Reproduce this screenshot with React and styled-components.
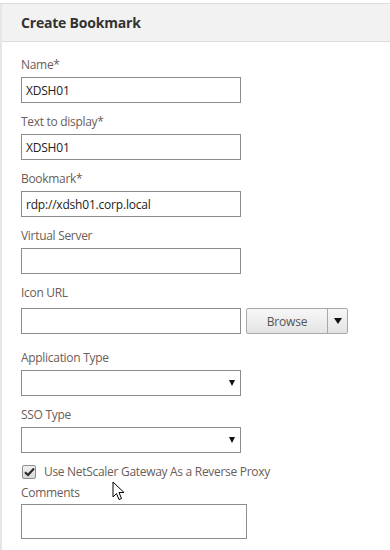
import React from "react";
import styled, { createGlobalStyle } from "styled-components";

const GlobalStyle = createGlobalStyle`
  html, body {
    margin: 0;
    padding: 0;
    background: #fff;
  }
  body {
    font-family: "Open Sans", "Noto Sans", Arial, sans-serif;
  }
`;

const Panel = styled.div`
  position: relative;
  margin-top: 3px;
  width: 390px;
  height: 547px;
  box-sizing: border-box;
  border-left: 2px solid #e6e6e6;
  border-top: 1px solid #dcdcdc;
  overflow: hidden;
`;

const Header = styled.div`
  height: 37px;
  background: #f2f2f2;
  border-bottom: 1px solid #dcdcdc;
  display: flex;
  align-items: center;
  padding-left: 19px;
  h1 {
    margin: 0;
    font-size: 14px;
    font-weight: 700;
    color: #333;
    letter-spacing: -0.2px;
  }
`;

const Form = styled.div`
  display: flex;
  flex-direction: column;
  padding: 15px 0 0 19px;
`;

const Field = styled.div`
  display: flex;
  flex-direction: column;
  margin-bottom: ${(p) => p.$after || 11}px;
`;

const Label = styled.label`
  font-size: 12px;
  line-height: 16px;
  color: #6b5d58;
  letter-spacing: -0.3px;
  margin-bottom: ${(p) => p.$gap || 4}px;
`;

const TextBox = styled.div`
  width: 220px;
  height: 26px;
  box-sizing: border-box;
  border: 1px solid #8c8c8c;
  background: #fff;
  font-size: 12px;
  color: #222;
  display: flex;
  align-items: center;
  padding-left: 4px;
  letter-spacing: -0.2px;
`;

const Row = styled.div`
  display: flex;
  align-items: center;
  gap: 5px;
`;

const SplitButton = styled.div`
  display: flex;
  height: 26px;
  box-sizing: border-box;
  border: 1px solid #a8a8a8;
  border-radius: 2px;
  background: linear-gradient(#f7f7f7, #e4e4e4);
  overflow: hidden;
`;

const BrowseLabel = styled.div`
  width: 80px;
  display: flex;
  align-items: center;
  justify-content: center;
  font-size: 12px;
  color: #555;
  border-right: 1px solid #a8a8a8;
  letter-spacing: -0.2px;
`;

const Caret = styled.div`
  width: 19px;
  display: flex;
  align-items: center;
  justify-content: center;
  &::after {
    content: "";
    border-left: 4px solid transparent;
    border-right: 4px solid transparent;
    border-top: 6px solid #111;
  }
`;

const Select = styled(TextBox)`
  justify-content: flex-end;
  padding-right: 5px;
  &::after {
    content: "";
    border-left: 3px solid transparent;
    border-right: 3px solid transparent;
    border-top: 6px solid #111;
  }
`;

const CheckRow = styled.div`
  display: flex;
  align-items: center;
  gap: 8px;
  margin: -1px 0 5px 1px;
  span {
    font-size: 12px;
    color: #6b5d58;
    letter-spacing: -0.3px;
  }
`;

const CheckBox = styled.div`
  width: 14px;
  height: 14px;
  box-sizing: border-box;
  border: 1px solid #8f8f8f;
  border-radius: 2px;
  background: linear-gradient(#f0f0f0, #d8d8d8);
  display: flex;
  align-items: center;
  justify-content: center;
`;

const TextArea = styled(TextBox)`
  width: 226px;
  height: 35px;
`;

const Cursor = styled.svg`
  position: absolute;
  left: 110px;
  top: 477px;
`;

const fields = [
  { label: "Name*", value: "XDSH01" },
  { label: "Text to display*", value: "XDSH01" },
  { label: "Bookmark*", value: "rdp://xdsh01.corp.local" },
  { label: "Virtual Server", value: "" },
];

export default function App() {
  return (
    <>
      <GlobalStyle />
      <Panel>
        <Header>
          <h1>Create Bookmark</h1>
        </Header>
        <Form>
          {fields.map((f) => (
            <Field key={f.label}>
              <Label>{f.label}</Label>
              <TextBox>{f.value}</TextBox>
            </Field>
          ))}
          <Field $after={16}>
            <Label $gap={7}>Icon URL</Label>
            <Row>
              <TextBox />
              <SplitButton>
                <BrowseLabel>Browse</BrowseLabel>
                <Caret />
              </SplitButton>
            </Row>
          </Field>
          <Field>
            <Label>Application Type</Label>
            <Select />
          </Field>
          <Field>
            <Label>SSO Type</Label>
            <Select />
          </Field>
          <CheckRow>
            <CheckBox>
              <svg width="11" height="10" viewBox="0 0 11 10">
                <path d="M1 5.2 L4 8 L10 1.5" fill="none" stroke="#2b2b2b" strokeWidth="2.2" />
              </svg>
            </CheckBox>
            <span>Use NetScaler Gateway As a Reverse Proxy</span>
          </CheckRow>
          <Field>
            <Label $gap={3}>Comments</Label>
            <TextArea />
          </Field>
        </Form>
        <Cursor width="14" height="22" viewBox="0 0 14 22">
          <path
            d="M1 1 L1 16 L4.5 12.5 L7 18.5 L9.5 17.5 L7 11.5 L12 11.5 Z"
            fill="#fff"
            stroke="#000"
            strokeWidth="1"
            strokeLinejoin="miter"
          />
        </Cursor>
      </Panel>
    </>
  );
}
